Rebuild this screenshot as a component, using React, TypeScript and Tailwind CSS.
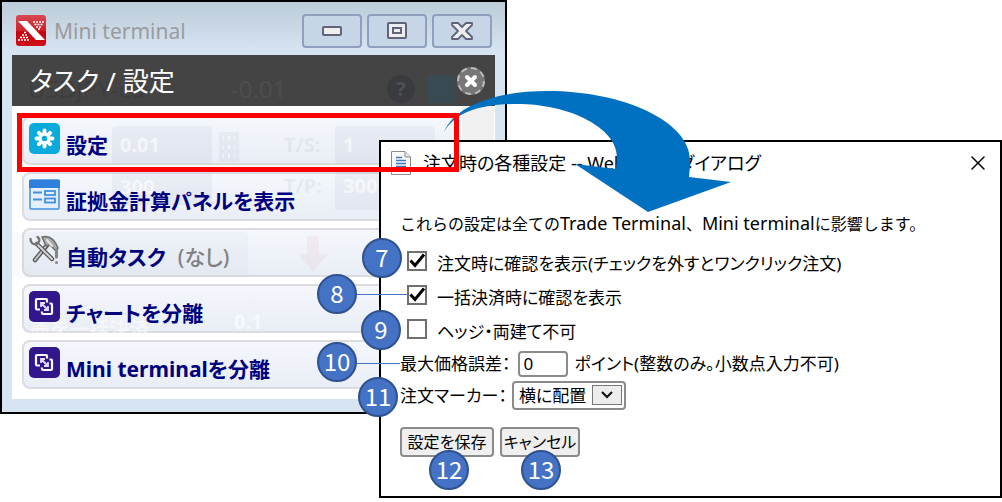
import type { ReactNode } from "react";
import { X } from "lucide-react";

const tasks = [
  { label: "設定", icon: <GearIcon />, active: true },
  { label: "証拠金計算パネルを表示", icon: <PanelIcon /> },
  { label: "自動タスク", note: "(なし)", icon: <ToolsIcon /> },
  { label: "チャートを分離", icon: <DetachIcon /> },
  { label: "Mini terminalを分離", icon: <DetachIcon /> },
];

const options = [
  { id: "confirm-order", label: "注文時に確認を表示(チェックを外すとワンクリック注文)", checked: true },
  { id: "confirm-close", label: "一括決済時に確認を表示", checked: true },
  { id: "no-hedge", label: "ヘッジ・両建て不可", checked: false },
];

function LogoIcon() {
  return (
    <svg viewBox="0 0 30 31" className="h-[31px] w-[30px] shrink-0" aria-hidden="true">
      <defs>
        <linearGradient id="logo" x1="0" y1="0" x2="0" y2="1">
          <stop offset="0" stopColor="#d84a50" />
          <stop offset="0.5" stopColor="#cf2029" />
          <stop offset="0.55" stopColor="#c4000c" />
          <stop offset="1" stopColor="#cf1019" />
        </linearGradient>
      </defs>
      <rect width="30" height="31" rx="3" fill="url(#logo)" />
      <path d="M2 6h9l18 19h-9z" fill="#fff" />
      <g stroke="#fff" strokeWidth="1.600" strokeDasharray="2 1">
        <path d="M17 7h11M18.500 9.500h8M20 12h5M22 14h2" />
        <path d="M8 17.500h2M6 20h5M4 22.500h9M2 25h12" />
      </g>
    </svg>
  );
}

function GearIcon() {
  return (
    <svg viewBox="0 0 31 31" className="size-[31px]" aria-hidden="true">
      <rect width="31" height="31" rx="5" fill="#0aabdc" />
      <g stroke="#fff" strokeWidth="4" strokeLinecap="round">
        <path d="M15.500 7.500v16M7.500 15.500h16M9.900 9.900l11.200 11.200M21.100 9.900l-11.200 11.200" />
      </g>
      <circle cx="15.500" cy="15.500" r="6" fill="#fff" />
      <circle cx="15.500" cy="15.500" r="2.800" fill="#0aabdc" />
    </svg>
  );
}

function PanelIcon() {
  return (
    <svg viewBox="0 0 31 31" className="size-[31px]" aria-hidden="true">
      <rect x="1" y="1" width="29" height="29" rx="1" fill="#e4effa" stroke="#3f8fe4" strokeWidth="1.500" />
      <path d="M0 1h31v8H0z" fill="#2f80dc" />
      <g fill="none" stroke="#3f8fe4" strokeWidth="1.800">
        <path d="M4 13.500h9M4 20.500h9" />
        <rect x="16" y="12" width="10" height="4" />
        <rect x="16" y="19.500" width="10" height="4" />
      </g>
    </svg>
  );
}

function ToolsIcon() {
  return (
    <svg viewBox="0 0 31 31" className="size-[31px]" fill="none" strokeLinecap="round" aria-hidden="true">
      <path d="M19 9 6 25" stroke="#555" strokeWidth="4.500" />
      <path d="M18 10 6 25" stroke="#c8c8c8" strokeWidth="2" />
      <path d="M8 9l15 15" stroke="#555" strokeWidth="4.500" />
      <path d="M8 9l15 15" stroke="#d5d5d5" strokeWidth="2" />
      <path d="M1.500 4c0 4 3 6 6 5s4-5 1-7" stroke="#777" strokeWidth="2.400" />
      <path d="M13 2c7-2 12 1 16 11l-2 3-6-6-4 1z" fill="#aaa" stroke="#6d6d6d" strokeWidth="1.500" strokeLinejoin="round" />
      <path d="M18 5l5 6" stroke="#e4e4e4" strokeWidth="2" />
      <path d="M27.500 15v7M27.500 27.500v0" stroke="#858585" strokeWidth="3" />
    </svg>
  );
}

function DetachIcon() {
  return (
    <svg viewBox="0 0 31 31" className="size-[31px]" aria-hidden="true">
      <rect width="31" height="31" rx="5" fill="#32178c" />
      <g fill="none" stroke="#fff" strokeWidth="2.200" strokeLinejoin="round">
        <path d="M11 18.500H8a1 1 0 0 1-1-1V9a1 1 0 0 1 1-1h9a1 1 0 0 1 1 1v2.500" />
        <path d="M20.500 12.500H22a1 1 0 0 1 1 1V22a1 1 0 0 1-1 1h-8a1 1 0 0 1-1-1v-1.500" />
      </g>
      <path d="M12.500 12.500l6 6M12 16v-4h4M19 15v4h-4" fill="none" stroke="#e8dcff" strokeWidth="1.800" />
    </svg>
  );
}

function DocumentIcon() {
  return (
    <svg viewBox="0 0 20 24" className="h-6 w-5 shrink-0" aria-hidden="true">
      <path d="M.5.500h13.500l5.500 5.500v17.500H.5z" fill="#fafafa" stroke="#8c8c8c" />
      <path d="M14 .5V6h5.500" fill="#e5e5e5" stroke="#8c8c8c" />
      <path d="M5 6.500h6M5 9.500h10M5 12.500h10M5 15.500h10M5 18.500h10" stroke="#3d7ab8" strokeWidth="1.500" />
    </svg>
  );
}

function CaptionButton({ label, children }: { label: string; children: ReactNode }) {
  return (
    <button
      aria-label={label}
      className="grid h-[34px] w-[60px] place-items-center rounded border-2 border-[#8f9fbd] bg-[#c6d6e7]"
    >
      {children}
    </button>
  );
}

// What shows faintly through the task panel
function GhostPanel() {
  return (
    <div aria-hidden="true" className="pointer-events-none absolute inset-0 overflow-hidden text-xl font-bold text-white/60">
      <div className="absolute left-[100px] top-[20px] flex h-[38px] w-[100px] items-center rounded bg-slate-400/10 px-2">0.01</div>
      <div className="absolute left-[207px] top-[26px] grid h-[30px] w-5 grid-cols-3 gap-1 bg-slate-400/10 p-1">
        {Array.from({ length: 9 }, (_, i) => (
          <i key={i} className="bg-white/50" />
        ))}
      </div>
      <div className="absolute left-[272px] top-[25px] text-slate-400/15">T/S:</div>
      <div className="absolute left-[323px] top-[20px] flex h-[38px] w-[100px] items-center rounded bg-slate-400/10 px-2">1</div>
      <div className="absolute left-[100px] top-[67px] h-8 w-[100px] rounded bg-slate-400/10 px-2">300</div>
      <div className="absolute left-[272px] top-[66px] text-slate-400/15">T/P:</div>
      <div className="absolute left-[323px] top-[66px] h-[38px] w-[100px] rounded bg-slate-400/10 px-2">300</div>
      <div className="absolute left-0 top-[126px] h-[46px] w-[236px] rounded bg-slate-400/5" />
      <svg viewBox="0 0 30 36" className="absolute left-[286px] top-[130px] h-9 w-[30px]">
        <path d="M9 0h12v18h9L15 36 0 18h9z" fill="#ef4444" opacity="0.050" />
      </svg>
      <div className="absolute left-[222px] top-[202px]">0.1</div>
      <div className="absolute left-[18px] top-[210px] text-white/50">売を一括決済</div>
    </div>
  );
}

function MiniTerminal() {
  return (
    <section className="w-[507px] max-w-full border-2 border-black bg-[#d7e4f1] bg-linear-to-b from-[#bdccda] to-[#d7e4f1] to-[50px] px-[10px] pb-[13px]">
      <header className="flex h-[53px] items-center gap-2 pl-1 pt-1">
        <LogoIcon />
        <h1 className="grow text-[21px] leading-7 text-[#9b9b9f]">Mini terminal</h1>
        <div className="flex gap-[5px] pr-[3px]">
          <CaptionButton label="最小化">
            <span className="h-[10px] w-5 rounded-xs border-2 border-[#60647a] bg-[#eee]" />
          </CaptionButton>
          <CaptionButton label="最大化">
            <span className="grid h-[17px] w-5 place-items-center rounded-xs border-2 border-[#60647a] bg-[#eee]">
              <span className="h-[7px] w-[10px] border-2 border-[#60647a]" />
            </span>
          </CaptionButton>
          <CaptionButton label="閉じる">
            <svg viewBox="0 0 22 18" className="h-[18px] w-[22px]" aria-hidden="true">
              <path
                d="M1 1h6l4 4 4-4h6v2l-6 6 6 6v2h-6l-4-4-4 4H1v-2l6-6-6-6z"
                fill="#eee"
                stroke="#60647a"
                strokeWidth="1.800"
                strokeLinejoin="round"
              />
            </svg>
          </CaptionButton>
        </div>
      </header>

      <div className="bg-white">
        <div className="relative flex h-[51px] items-center justify-between bg-[#444] pl-[18px] pr-[10px]">
          <div aria-hidden="true" className="absolute inset-0 flex items-center gap-3 pl-4 pt-4 text-2xl text-black/10">
            <span className="grow">USDJPY-cd</span>
            <span className="w-36 text-white/5">-0.01</span>
            <span className="mr-10 flex gap-3">
              <span className="grid size-7 place-items-center rounded-full bg-slate-900/20 text-xl font-bold text-white/10">?</span>
              <span className="size-7 rounded bg-sky-700/15" />
            </span>
          </div>
          <h2 className="relative text-[26px] leading-8 text-white">タスク / 設定</h2>
          <button
            aria-label="パネルを閉じる"
            className="relative grid size-[28px] place-items-center rounded-full border-2 border-dashed border-[#bbb] bg-[#777]"
          >
            <X className="size-4 text-white" strokeWidth={6} />
          </button>
        </div>

        <div className="relative flex">
          <ul className="flex grow flex-col gap-[7px] pb-[10px] pl-[10px] pt-[10px]">
            {tasks.map((task) => (
              <li key={task.label} className="relative">
                <button className="flex h-[49px] w-full items-start gap-[6px] rounded-lg border-2 border-[#dcdcdf] bg-linear-to-b from-[#f4f7fc] to-[#e9edf5] pl-[5px] pt-[5px] text-left text-[21px] font-bold text-[#00007f]">
                  <span className="relative z-10">{task.icon}</span>
                  <span className="relative z-10 pt-2 leading-7">
                    {task.label}
                    {task.note && <span className="pl-3 font-medium text-[#808080]">{task.note}</span>}
                  </span>
                </button>
                {task.active && <div className="absolute -bottom-[7px] -left-[5px] -right-[3px] -top-[3px] z-10 border-[5px] border-[#f00]" />}
              </li>
            ))}
          </ul>
          <div className="ml-[6px] mr-[1px] flex w-8 justify-center bg-[#f0f0f0] pt-[30px] text-xs text-[#505050]" aria-hidden="true">
            ▴
          </div>
          <GhostPanel />
        </div>
      </div>
    </section>
  );
}

function OrderDialog() {
  return (
    <section className="absolute left-[379px] right-0 top-[140px] border-2 border-black bg-white pb-[39px] pl-[19px] pr-[10px] text-[17px] leading-[26px] text-black">
      <header className="-ml-[9px] flex h-[42px] items-center gap-3">
        <DocumentIcon />
        <h2 className="grow text-[18px]">注文時の各種設定 -- Webページダイアログ</h2>
        <button aria-label="ダイアログを閉じる">
          <X className="size-6" strokeWidth={1.5} />
        </button>
      </header>

      <p className="pb-[14px] pt-[26px] text-[16px] [font-feature-settings:normal]">
        これらの設定は全ての<span className="text-[18px]">Trade Terminal</span>、
        <span className="text-[18px]">Mini terminal</span>に影響します。
      </p>

      <div className="flex flex-col gap-2 pl-[7px]">
        {options.map((option) => (
          <div key={option.id} className="flex gap-[10px]">
            <span className="relative size-5">
              <input
                id={option.id}
                type="checkbox"
                defaultChecked={option.checked}
                className="peer block size-5 appearance-none border-2 border-[#707070] bg-white"
              />
              <svg
                viewBox="0 0 20 20"
                className="pointer-events-none absolute inset-0 hidden size-5 peer-checked:block"
                aria-hidden="true"
              >
                <path d="M3.500 9.500l4.500 5 9-11" fill="none" stroke="#000" strokeWidth="3" />
              </svg>
            </span>
            <label htmlFor={option.id}>{option.label}</label>
          </div>
        ))}
      </div>

      <div className="flex items-center gap-[7px] pt-[6px]">
        <label htmlFor="slippage">最大価格誤差：</label>
        <input
          id="slippage"
          defaultValue="0"
          className="h-[26px] w-[50px] rounded border-2 border-[#8b8b8b] bg-white px-1"
        />
        <span>ポイント(整数のみ。小数点入力不可)</span>
      </div>

      <div className="flex items-center gap-[5px] pt-1">
        <label htmlFor="marker">注文マーカー：</label>
        <div className="relative">
          <select
            id="marker"
            className="block h-[29px] w-[114px] appearance-none rounded border-2 border-[#8b8b8b] bg-white pl-[5px]"
          >
            <option>横に配置</option>
          </select>
          <span className="pointer-events-none absolute right-1 top-1 grid h-5 w-[30px] place-items-center border border-[#777] bg-[#ececec]">
            <svg viewBox="0 0 12 8" className="h-2 w-3" aria-hidden="true">
              <path d="M1 1l5 5 5-5" fill="none" stroke="#111" strokeWidth="2" />
            </svg>
          </span>
        </div>
      </div>

      <div className="flex gap-[6px] pt-[17px] text-[16px]">
        <button className="h-[30px] w-[94px] whitespace-nowrap rounded border-2 border-[#8b8b8b] bg-[#efefef]">設定を保存</button>
        <button className="h-[30px] w-[80px] whitespace-nowrap rounded border-2 border-[#8b8b8b] bg-[#efefef]">キャンセル</button>
      </div>
    </section>
  );
}

function Badge({ n, place }: { n: number; place: string }) {
  return (
    <div
      className={`absolute grid size-10 place-items-center rounded-full border-2 border-[#2f528f] bg-[#4472c4] pb-[2px] font-['Noto_Sans_CJK_JP',sans-serif] text-[24px] leading-none text-white ${place}`}
    >
      {n}
    </div>
  );
}

export default function App() {
  return (
    <main className="relative min-h-screen bg-white font-['Noto_Sans','Noto_Sans_CJK_JP',sans-serif] [font-feature-settings:'palt']">
      <MiniTerminal />
      <OrderDialog />

      <svg viewBox="0 0 290 124" className="pointer-events-none absolute left-[443px] top-[90px] h-[124px] w-[290px]" aria-hidden="true">
        <path
          d="M1 42C12 15 55 1 104 1C182 1 247 32 247 70Q247 79 246 87L288 92L205 122L132 74L173 79L174 67C174 38 127 14 74 14C37 14 13 22 1 42Z"
          fill="#0070c0"
        />
      </svg>

      <div className="absolute left-[356px] top-[294px] h-px w-[51px] bg-[#4472c4]" />
      <div className="absolute left-[356px] top-[363px] h-px w-11 bg-[#4472c4]" />
      <Badge n={7} place="left-[362px] top-[238px]" />
      <Badge n={8} place="left-[317px] top-[274px]" />
      <Badge n={9} place="left-[361px] top-[310px]" />
      <Badge n={10} place="left-[317px] top-[342px]" />
      <Badge n={11} place="left-[358px] top-[377px]" />
      <Badge n={12} place="left-[429px] top-[450px]" />
      <Badge n={13} place="left-[521px] top-[450px]" />
    </main>
  );
}
